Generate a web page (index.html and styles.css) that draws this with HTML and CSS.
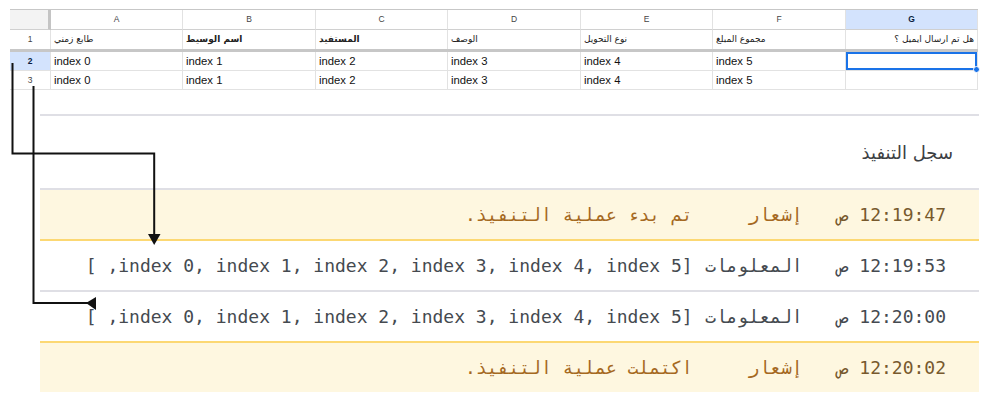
FILE: index.html
```html
<!DOCTYPE html>
<html lang="ar">
<head>
<meta charset="utf-8">
<link rel="stylesheet" href="styles.css">
</head>
<body>
<div class="page">
  <div class="sheet">
    <div class="srow hdr">
      <div class="c corner"></div>
      <div class="c">A</div>
      <div class="c">B</div>
      <div class="c">C</div>
      <div class="c">D</div>
      <div class="c">E</div>
      <div class="c">F</div>
      <div class="c hsel">G</div>
    </div>
    <div class="srow r1">
      <div class="c rh">1</div>
      <div class="c ar">طابع زمني</div>
      <div class="c ar bold">اسم الوسيط</div>
      <div class="c ar bold">المستفيد</div>
      <div class="c ar">الوصف</div>
      <div class="c ar">نوع التحويل</div>
      <div class="c ar">مجموع المبلغ</div>
      <div class="c ar end">هل تم ارسال ايميل ؟</div>
    </div>
    <div class="freeze"></div>
    <div class="srow">
      <div class="c rh hsel">2</div>
      <div class="c">index 0</div>
      <div class="c">index 1</div>
      <div class="c">index 2</div>
      <div class="c">index 3</div>
      <div class="c">index 4</div>
      <div class="c">index 5</div>
      <div class="c active"></div>
    </div>
    <div class="srow">
      <div class="c rh">3</div>
      <div class="c">index 0</div>
      <div class="c">index 1</div>
      <div class="c">index 2</div>
      <div class="c">index 3</div>
      <div class="c">index 4</div>
      <div class="c">index 5</div>
      <div class="c"></div>
    </div>
  </div>

  <div class="log">
    <div class="log-title">سجل التنفيذ</div>
    <div class="log-row notice b-yellow">
      <span class="time">12:19:47 ص</span>
      <span class="type">إشعار</span>
      <span class="msg">تم بدء عملية التنفيذ.</span>
    </div>
    <div class="log-row b-gray">
      <span class="time">12:19:53 ص</span>
      <span class="type">المعلومات</span>
      <span class="msg" dir="ltr">[ ,index 0, index 1, index 2, index 3, index 4, index 5]</span>
    </div>
    <div class="log-row b-yellow">
      <span class="time">12:20:00 ص</span>
      <span class="type">المعلومات</span>
      <span class="msg" dir="ltr">[ ,index 0, index 1, index 2, index 3, index 4, index 5]</span>
    </div>
    <div class="log-row notice">
      <span class="time">12:20:02 ص</span>
      <span class="type">إشعار</span>
      <span class="msg">اكتملت عملية التنفيذ.</span>
    </div>
  </div>

  <svg class="arrows" width="997" height="407" viewBox="0 0 997 407">
    <path d="M12.5 63V153.5H154.2V236" fill="none" stroke="#111" stroke-width="2"/>
    <polygon points="148,234 160.5,234 154.2,245" fill="#111"/>
    <path d="M33.5 86V303H88" fill="none" stroke="#111" stroke-width="2"/>
    <polygon points="86,303 96,297 96,310" fill="#111"/>
  </svg>
</div>
</body>
</html>
```

FILE: styles.css
```css
html, body {
  margin: 0;
  background: #fff;
}
body {
  font-family: "Liberation Sans", Arial, sans-serif;
}
.page {
  position: relative;
  width: 997px;
  height: 407px;
  overflow: hidden;
}

/* spreadsheet */
.sheet {
  margin: 9px 0 0 10px;
  width: 968px;
  border-top: 1px solid #c7c7c7;
}
.srow {
  display: grid;
  grid-template-columns: 41px 132px 133px 132px 133px 132px 133px 132px;
  height: 19px;
}
.srow.hdr {
  height: 20px;
}
.c {
  box-sizing: border-box;
  border-right: 1px solid #e2e2e2;
  border-bottom: 1px solid #e2e2e2;
  font-size: 11.3px;
  line-height: 18px;
  padding-left: 3px;
  color: #111;
  white-space: nowrap;
  overflow: hidden;
}
.hdr .c {
  font-size: 8.5px;
  line-height: 19px;
  text-align: center;
  padding: 0;
  color: #444;
  border-bottom-color: #d0d0d0;
}
.hdr .c.corner {
  background: #f3f3f3;
  border-right: 3px solid #c4c4c4;
}
.c.rh {
  text-align: center;
  padding: 0;
  font-size: 8.5px;
  color: #444;
}
.c.hsel {
  background: #d3e3fd;
  font-weight: bold;
  color: #0a1d3d;
}
.r1 .c {
  border-bottom: none;
}
.c.ar {
  font-family: "DejaVu Sans", sans-serif;
  font-size: 9px;
  line-height: 19px;
  color: #222;
}
.c.bold {
  font-weight: bold;
}
.c.end {
  text-align: right;
  padding: 0 3px 0 0;
}
.freeze {
  height: 3px;
  background: #c7c7c7;
}
.c.active {
  position: relative;
  overflow: visible;
  z-index: 1;
  box-shadow: inset 0 0 0 2px #1a73e8;
}
.c.active::after {
  content: "";
  position: absolute;
  right: -3px;
  bottom: -3px;
  width: 5px;
  height: 5px;
  background: #1a73e8;
  border: 1px solid #fff;
  border-radius: 50%;
}

/* execution log */
.log {
  margin: 24px 0 0 40px;
  width: 939px;
  border-top: 2px solid #dfdfe5;
}
.log-title {
  height: 72px;
  display: flex;
  align-items: center;
  direction: rtl;
  padding-right: 26px;
  font-family: "DejaVu Sans", sans-serif;
  font-size: 18px;
  color: #3c4043;
  border-bottom: 2px solid #dfdfe5;
}
.log-row {
  height: 49px;
  display: flex;
  align-items: center;
  direction: rtl;
  padding-right: 33px;
  font-family: "DejaVu Sans Mono", "Liberation Mono", monospace;
  font-size: 18px;
  color: #454a50;
  white-space: pre;
}
.log-row.notice {
  background: #fef7e0;
  color: #a5691f;
}
.log-row.notice .time {
  color: #77592d;
}
.b-yellow {
  border-bottom: 2px solid #fcd873;
}
.b-gray {
  border-bottom: 2px solid #dfdfe5;
}
.type {
  width: 110px;
  margin-right: 35px;
}

.arrows {
  position: absolute;
  left: 0;
  top: 0;
  pointer-events: none;
}
```
